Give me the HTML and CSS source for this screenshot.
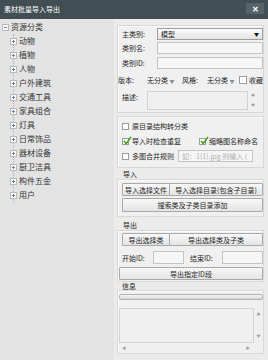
FILE: index.html
```html
<!doctype html>
<html lang="zh">
<head>
    <meta charset="UTF-8">
    <title>素材批量导入导出</title>
    <link rel="stylesheet" href="styles.css">
</head>
<body>
    <header class="titlebar">
        <span class="title">素材批量导入导出</span>
        <span class="close">✕</span>
    </header>

    <div class="main">
        <aside class="tree">
            <div class="root"><span class="tog minus"></span><span>资源分类</span></div>
            <ul class="children">
                <li><span class="tog"></span>动物</li>
                <li><span class="tog"></span>植物</li>
                <li><span class="tog"></span>人物</li>
                <li><span class="tog"></span>户外建筑</li>
                <li><span class="tog"></span>交通工具</li>
                <li><span class="tog"></span>家具组合</li>
                <li><span class="tog"></span>灯具</li>
                <li><span class="tog"></span>日常饰品</li>
                <li><span class="tog"></span>器材设备</li>
                <li><span class="tog"></span>厨卫洁具</li>
                <li><span class="tog"></span>构件五金</li>
                <li><span class="tog"></span>用户</li>
            </ul>
        </aside>

        <section class="panel">
            <div class="group g-info">
                <div class="field">
                    <label>主类别:</label>
                    <div class="select"><span>模型</span><span class="caret">▼</span></div>
                </div>
                <div class="field f2">
                    <label>类别名:</label>
                    <div class="input"></div>
                </div>
                <div class="field f3">
                    <label>类别ID:</label>
                    <div class="input"></div>
                </div>
                <div class="opts">
                    <span class="w-ver">版本:</span>
                    <span class="w-combo">无分类 <i>▼</i></span>
                    <span class="w-style">风格:</span>
                    <span class="w-combo2">无分类 <i>▼</i></span>
                    <span class="cb"></span>
                    <span>收藏</span>
                </div>
                <div class="desc">
                    <label>描述:</label>
                    <div class="memo"></div>
                    <div class="vscroll"><i>▲</i><i>▼</i></div>
                </div>
            </div>

            <div class="group g-opts">
                <div class="check-row">
                    <span class="cb"></span><span>原目录结构转分类</span>
                </div>
                <div class="check-row r2">
                    <span class="check-item">
                        <span class="cb checked"><svg viewBox="0 0 10 10"><path d="M1 5.5 L3.6 8.4 L9 1"/></svg></span><span>导入时检查重复</span>
                    </span>
                    <span class="cb checked"><svg viewBox="0 0 10 10"><path d="M1 5.5 L3.6 8.4 L9 1"/></svg></span><span>缩略图名称命名</span>
                </div>
                <div class="check-row r3">
                    <span class="cb"></span><span>多图合并规则</span>
                    <div class="input rule">如：1(1).jpg 则输入 (</div>
                </div>
            </div>

            <div class="sect">导入</div>
            <div class="group g-import">
                <div class="btn-row">
                    <div class="btn b-left">导入选择文件</div>
                    <div class="btn b-right">导入选择目录(包含子目录)</div>
                </div>
                <div class="btn b-wide">搜索类及子类目录添加</div>
            </div>

            <div class="sect s-export">导出</div>
            <div class="group g-export">
                <div class="btn-row">
                    <div class="btn b-left">导出选择类</div>
                    <div class="btn b-right">导出选择类及子类</div>
                </div>
                <div class="id-row">
                    <label class="l-start">开始ID:</label>
                    <div class="input id-start"></div>
                    <label class="l-end">结束ID:</label>
                    <div class="input"></div>
                </div>
                <div class="btn b-range">导出指定ID段</div>
            </div>

            <div class="sect s-msg">信息</div>
            <div class="group g-msg">
                <div class="progress"></div>
                <div class="log">
                    <div class="memo"></div>
                    <div class="vscroll"><i>▲</i><i>▼</i></div>
                </div>
                <div class="hscroll"><i>◀</i><i>▶</i></div>
            </div>
        </section>
    </div>
</body>
</html>
```

FILE: styles.css
```css
* {
    box-sizing: border-box;
}

html, body {
    margin: 0;
    padding: 0;
    width: 268px;
    height: 360px;
    overflow: hidden;
    font-family: "Noto Sans CJK SC", "Noto Sans", sans-serif;
    color: #262626;
}

body {
    display: grid;
    grid-template-rows: 19px 1fr;
}

/* title bar */
.titlebar {
    background: #414e54;
    display: flex;
    align-items: flex-start;
    justify-content: space-between;
    padding: 0 5px 0 4px;
}

.title {
    color: #fff;
    font-size: 7px;
    line-height: 19px;
}

.close {
    margin-top: 3px;
    width: 18px;
    height: 11px;
    background: #56636a;
    color: #fff;
    font-size: 8px;
    font-weight: bold;
    display: flex;
    align-items: center;
    justify-content: center;
}

.main {
    display: grid;
    grid-template-columns: 114px 1fr;
    min-height: 0;
}

/* tree */
.tree {
    background: #e3e3e3;
    padding-top: 1px;
    font-size: 8px;
    line-height: 14px;
    color: #333;
}

.root {
    display: flex;
    align-items: center;
    height: 14px;
    padding-left: 2px;
}

.tog {
    flex: none;
    width: 7px;
    height: 7px;
    margin-right: 2px;
    border: 1px solid #b9b9b9;
    background:
        linear-gradient(#6d82aa, #6d82aa) center / 3px 1px no-repeat,
        linear-gradient(#6d82aa, #6d82aa) center / 1px 3px no-repeat,
        #f7f7f7;
}

.tog.minus {
    background:
        linear-gradient(#6d82aa, #6d82aa) center / 3px 1px no-repeat,
        #f7f7f7;
}

.children {
    list-style: none;
    margin: 0 0 0 13px;
    padding: 0;
    border-left: 1px dotted #b0b0b0;
}

.children li {
    display: flex;
    align-items: center;
    height: 14px;
}

.children .tog {
    margin-left: -4px;
}

/* right panel */
.panel {
    background: #ebebeb;
    padding: 6px 5px 0 3px;
    font-size: 7px;
    line-height: 10px;
    display: flex;
    flex-direction: column;
}

.group {
    border: 1px solid #d8d8d8;
    background: #f0f0f0;
    box-shadow: inset 1px 1px 0 #fbfbfb;
}

.input {
    flex: 1;
    height: 12px;
    border: 1px solid #c4c4c4;
    background: #f6f6f6;
}

.g-info {
    padding: 2px 0 2px 4px;
}

.field {
    display: flex;
    align-items: center;
    height: 12px;
}

.field label {
    flex: none;
    width: 35px;
}

.f2 {
    margin-top: 2px;
}

.f3 {
    margin-top: 3px;
}

.select {
    flex: 1;
    height: 12px;
    border: 1px solid #9e9e9e;
    background: linear-gradient(#fbfbfb, #e3e3e3);
    display: flex;
    align-items: center;
    justify-content: space-between;
    padding: 0 3px;
}

.caret {
    font-size: 5px;
    color: #111;
}

.opts {
    display: flex;
    align-items: center;
    height: 12px;
    margin: 5px 0 0 -4px;
    white-space: nowrap;
    overflow: hidden;
}

.opts span {
    flex: none;
}

.opts i {
    font-style: normal;
    font-size: 5px;
    color: #8a8a8a;
}

.w-ver { width: 29px; }
.w-combo { width: 35px; }
.w-style { width: 25px; }
.w-combo2 { width: 32px; }

.cb {
    flex: none;
    position: relative;
    width: 7px;
    height: 7px;
    margin-right: 3px;
    border: 1px solid #9c9c9c;
    background: #fff;
}

.opts .cb {
    width: 8px;
    height: 8px;
    margin-right: 2px;
}

.cb svg {
    position: absolute;
    left: 0;
    top: -3px;
    width: 9px;
    height: 9px;
    overflow: visible;
}

.cb path {
    fill: none;
    stroke: #3d9e1f;
    stroke-width: 1.7;
}

.desc {
    display: flex;
    height: 19px;
    margin-top: 5px;
}

.desc label {
    flex: none;
    width: 25px;
    line-height: 12px;
}

.memo {
    flex: 1;
    border: 1px solid #d2d2d2;
    background: #efefef;
}

.desc .memo {
    flex: none;
    width: 101px;
}

.vscroll {
    width: 10px;
    display: flex;
    flex-direction: column;
    justify-content: space-between;
    align-items: center;
    padding: 2px 0;
}

.vscroll i, .hscroll i {
    font-style: normal;
    font-size: 4px;
    line-height: 5px;
    color: #9a9a9a;
}

.g-opts {
    margin-top: 3px;
    padding: 4px 0 5px 4px;
}

.check-row {
    display: flex;
    align-items: center;
    height: 10px;
    white-space: nowrap;
}

.check-item {
    display: flex;
    align-items: center;
    width: 77px;
}

.r2 {
    margin-top: 5px;
}

.r3 {
    margin-top: 4px;
    height: 12px;
}

.rule {
    flex: none;
    width: 75px;
    margin-left: 4px;
    padding-left: 3px;
    color: #b0b0b0;
    line-height: 10px;
    overflow: hidden;
}

.sect {
    height: 10px;
    margin-top: 1px;
    padding-left: 6px;
}

.s-export {
    margin-top: 3px;
}

.s-msg {
    height: 8px;
    line-height: 8px;
    margin-top: 0;
    padding-left: 5px;
}

.g-import {
    padding: 3px 0 4px 4px;
}

.btn-row {
    display: flex;
    height: 13px;
}

.btn {
    height: 13px;
    border: 1px solid #a9a9a9;
    border-radius: 1px;
    background: linear-gradient(#f8f8f8, #e4e4e4);
    display: flex;
    align-items: center;
    justify-content: center;
    white-space: nowrap;
}

.b-left {
    width: 48px;
}

.b-right {
    flex: 1;
    margin-left: -1px;
}

.b-wide {
    height: 14px;
    margin-top: 2px;
}

.g-export {
    padding: 2px 0 1px 4px;
}

.id-row {
    display: flex;
    align-items: center;
    height: 13px;
    margin-top: 5px;
}

.id-row .input {
    height: 13px;
}

.l-start {
    width: 31px;
}

.id-start {
    flex: none;
    width: 31px;
}

.l-end {
    width: 32px;
    margin-left: 6px;
}

.b-range {
    margin: 3px 0 0 -3px;
}

.g-msg {
    padding: 3px 0 0 1px;
}

.progress {
    height: 6px;
    border: 1px solid #b3b3b3;
    border-radius: 2px;
    background: linear-gradient(#f5f5f5, #d6d6d6);
}

.log {
    display: flex;
    height: 35px;
    margin-top: 8px;
}

.log .vscroll {
    width: 9px;
    padding: 4px 0;
}

.hscroll {
    height: 10px;
    display: flex;
    align-items: center;
    justify-content: space-between;
    padding: 0 13px 0 3px;
}
```
